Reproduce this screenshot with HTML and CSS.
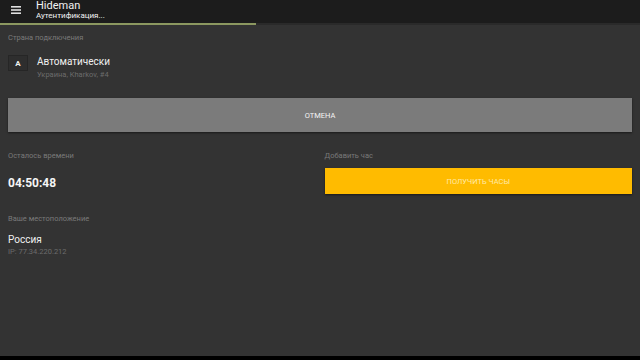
FILE: index.html
```html
<!DOCTYPE html>
<html lang="ru">
<head>
  <meta charset="UTF-8">
  <meta name="viewport" content="width=device-width, initial-scale=1.0">
  <title>Hideman</title>
  <link rel="stylesheet" href="styles.css">
</head>
<body>
  <div class="app">
    <header class="toolbar">
      <svg class="menu-icon" width="10" height="8" viewBox="0 0 10 8">
        <rect x="0" y="0" width="10" height="1.6" fill="#e0e0e0"/>
        <rect x="0" y="3.2" width="10" height="1.6" fill="#e0e0e0"/>
        <rect x="0" y="6.4" width="10" height="1.6" fill="#e0e0e0"/>
      </svg>
      <div class="titles">
        <div class="title">Hideman</div>
        <div class="subtitle">Аутентификация...</div>
      </div>
    </header>
    <div class="progress"><div class="progress-fill"></div></div>

    <main class="content">
      <div class="label">Страна подключения</div>
      <div class="country">
        <div class="badge">A</div>
        <div>
          <div class="country-name">Автоматически</div>
          <div class="hint">Украина, Kharkov, #4</div>
        </div>
      </div>

      <button class="btn btn-cancel">ОТМЕНА</button>

      <div class="columns">
        <div class="col">
          <div class="label">Осталось времени</div>
          <div class="timer">04:50:48</div>
        </div>
        <div class="col">
          <div class="label">Добавить час</div>
          <button class="btn btn-hours">ПОЛУЧИТЬ ЧАСЫ</button>
        </div>
      </div>

      <div class="label">Ваше местоположение</div>
      <div class="location">Россия</div>
      <div class="hint">IP: 77.34.220.212</div>
    </main>
    <div class="navbar"></div>
  </div>
</body>
</html>
```

FILE: styles.css
```css
* {
  box-sizing: border-box;
}
body {
  margin: 0;
  font-family: 'Roboto', 'Liberation Sans', sans-serif;
  background-color: #333333;
}
.app {
  width: 640px;
  height: 360px;
  display: flex;
  flex-direction: column;
  overflow: hidden;
}
.toolbar {
  height: 23px;
  background-color: #1c1c1c;
  display: flex;
  align-items: center;
  padding-left: 11px;
}
.menu-icon {
  margin-right: 15px;
  margin-top: -4px;
}
.titles {
  margin-top: -2px;
}
.title {
  color: #f2f2f2;
  font-size: 11px;
  line-height: 11px;
}
.subtitle {
  color: #f2f2f2;
  font-size: 8px;
  line-height: 10px;
}
.progress {
  height: 2px;
  background-color: #2a2a2a;
}
.progress-fill {
  width: 256px;
  height: 2px;
  background-color: #8c9860;
}
.content {
  flex: 1;
  padding: 8px 8px 0 8px;
}
.label {
  color: #7a7a7a;
  font-size: 7.5px;
  line-height: 10px;
}
.hint {
  color: #6c6c6c;
  font-size: 7.5px;
  line-height: 11px;
}
.country {
  display: flex;
  align-items: flex-start;
  margin-top: 12px;
}
.badge {
  width: 20px;
  height: 16px;
  border: 1px solid #262626;
  background-color: #2e2e2e;
  color: #f0f0f0;
  font-size: 8px;
  font-weight: bold;
  display: flex;
  align-items: center;
  justify-content: center;
  margin-right: 9px;
}
.country-name {
  color: #f0f0f0;
  font-size: 10px;
  line-height: 14px;
}
.btn {
  display: block;
  width: 100%;
  border: none;
  font-family: inherit;
  font-size: 7.5px;
  cursor: pointer;
}
.btn-cancel {
  margin-top: 18px;
  height: 34px;
  background-color: #7b7b7b;
  color: #f5f5f5;
  box-shadow: 0 1px 2px rgba(0, 0, 0, 0.5);
}
.columns {
  display: grid;
  grid-template-columns: 1fr 1fr;
  gap: 9px;
  margin-top: 19px;
}
.timer {
  color: #f5f5f5;
  font-size: 12px;
  font-weight: bold;
  margin-top: 15px;
}
.btn-hours {
  margin-top: 7px;
  height: 26px;
  background-color: #ffbb00;
  color: #ffe9a8;
  box-shadow: 0 1px 2px rgba(0, 0, 0, 0.5);
}
.columns + .label {
  margin-top: 20px;
}
.location {
  color: #f0f0f0;
  font-size: 10px;
  line-height: 12px;
  margin-top: 10px;
}
.navbar {
  height: 4px;
  background-color: #000;
}
```
